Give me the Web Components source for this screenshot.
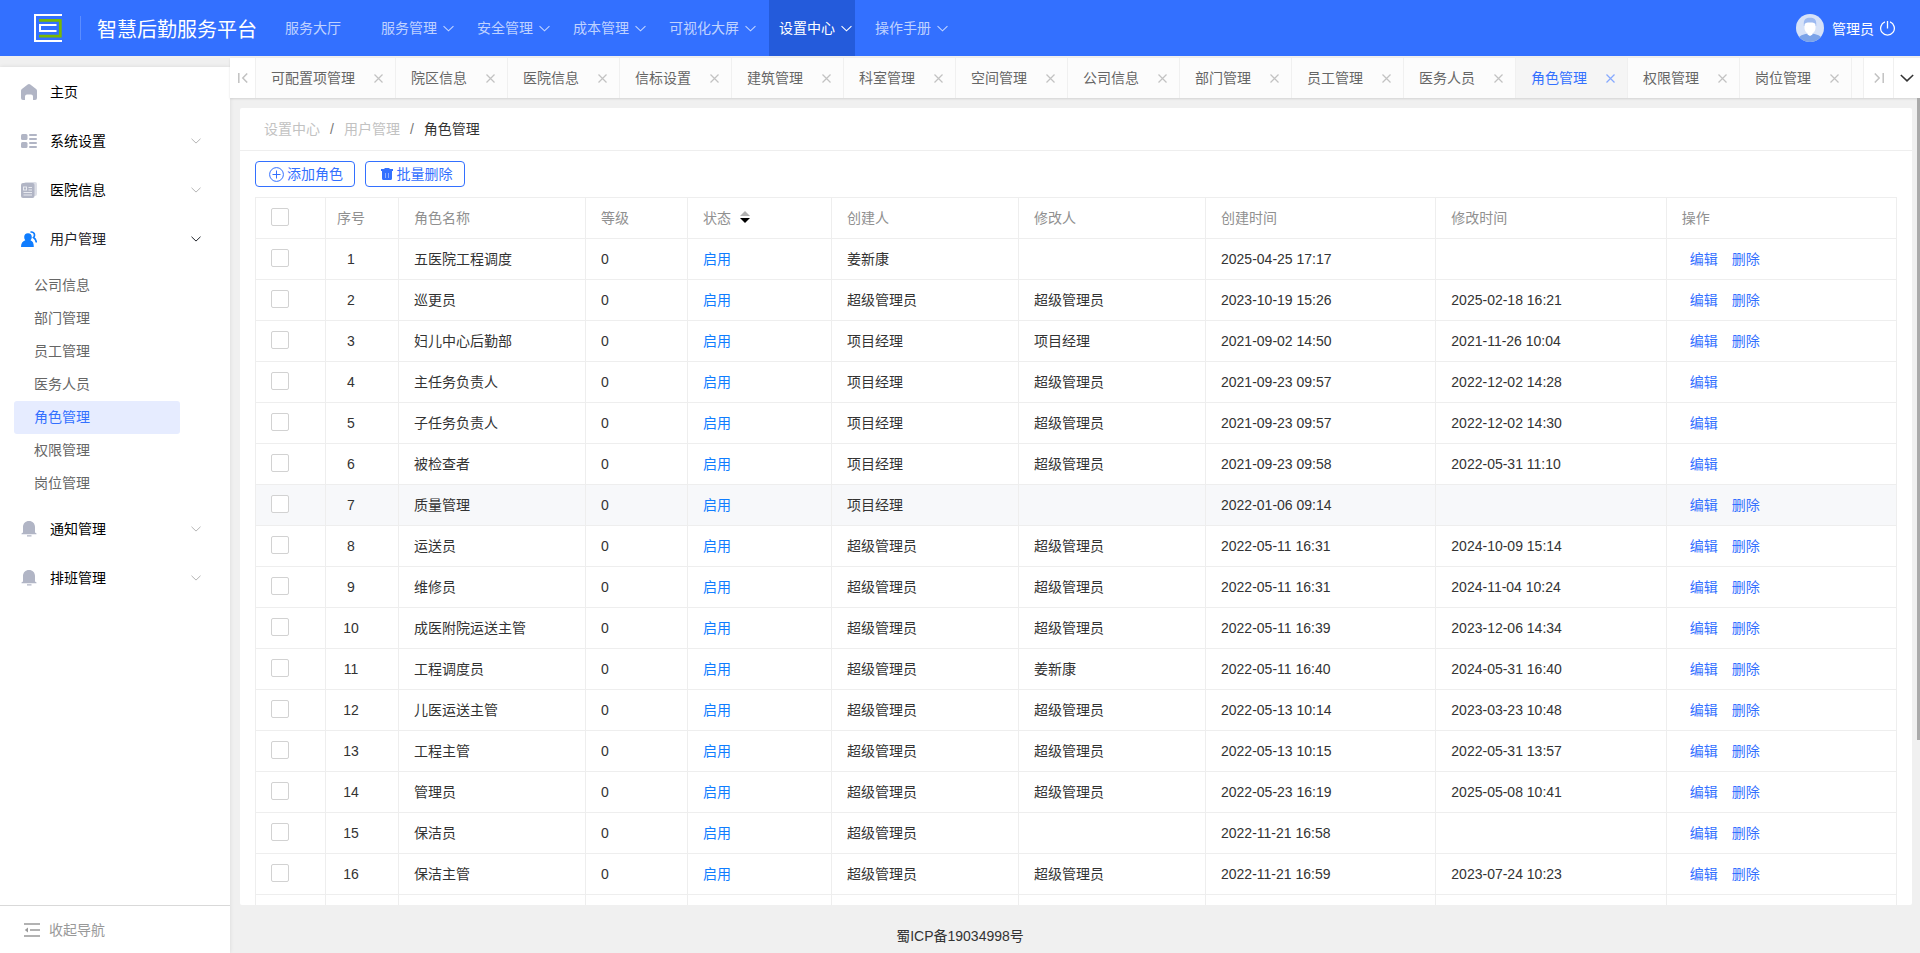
<!DOCTYPE html>
<html lang="zh-CN">
<head>
<meta charset="utf-8">
<title>智慧后勤服务平台</title>
<style>
  html, body { height: 100%; margin: 0; }
  body {
    font-family: "Liberation Sans", "Noto Sans CJK SC", sans-serif;
    font-size: 14px;
    line-height: 24px;
    color: #333;
    background: #f0f0f0;
    overflow: hidden;
  }
</style>
</head>
<body>
<admin-app></admin-app>

<script>
const BOX = '*{box-sizing:border-box}a{color:inherit;text-decoration:none}button{font:inherit;color:inherit;background:none;border:0;padding:0;cursor:pointer}svg{display:block;flex:none}';

const CHEVRON = (w, h, width = 1.2) =>
  `<svg width="${w}" height="${h}" viewBox="0 0 12 7" fill="none" stroke="currentColor" stroke-width="${width}" aria-hidden="true"><path d="M.6.8 6 6 11.4.8"/></svg>`;

const ICONS = {
  home: '<path fill="#b1b5c5" d="M8 0c.5 0 .9.2 1.300.5l5.800 4.400c.6.500.9 1.100.9 1.800V14a2 2 0 0 1-2 2h-2v-3.500a2 2 0 0 0-2-2h-4a2 2 0 0 0-2 2V16H2a2 2 0 0 1-2-2V6.700C0 6 .3 5.400.9 4.900L6.700.5C7.100.2 7.500 0 8 0z"/>',
  grid: '<g fill="#b1b5c5"><rect y="1" width="6.500" height="6" rx="1.500"/><rect y="9" width="6.500" height="6" rx="1.500"/><rect x="8" y="1" width="8" height="2" rx="1"/><rect x="8" y="5" width="8" height="2" rx="1"/><rect x="8" y="9" width="8" height="2" rx="1"/><rect x="8" y="13" width="8" height="2" rx="1"/></g>',
  news: '<rect x="3" y="0" width="13" height="14" rx="2" fill="#dcdee6"/><rect x="0" y="1" width="13.500" height="15" rx="2" fill="#b1b5c5"/><g stroke="#e8eaf0" stroke-width="1" fill="none"><path d="M7.500 5.500H11M7.500 8H11M2.500 10.500H11M2.500 13H11"/><rect x="2.500" y="5" width="3" height="3"/></g>',
  user: '<path d="M9.500 1.200a3 3 0 0 1 4 3c0 1-.4 1.700-1 2.300 1.900 1.200 2.600 2.900 2.900 5" stroke="#0f7dff" stroke-width="1.700" fill="none"/><path fill="#0f7dff" d="M7 2.200a3.800 3.800 0 0 1 3.800 3.800c0 1.300-.5 2.400-1.300 3.200 2.400.9 3.300 3 3.300 6.800H0c0-3.800 1.600-5.900 4.300-6.800A4.400 4.400 0 0 1 3.200 6 3.800 3.800 0 0 1 7 2.200z"/>',
  bell: '<path fill="#b1b5c5" d="M8 0c3.600 0 6 2.600 6 6v5.500l1.500.9v.9H.5v-.9l1.500-.9V6c0-3.400 2.400-6 6-6zM6 14.300h4.500v1.200H6z"/>'
};

function define(name, html) {
  customElements.define(name, class extends HTMLElement {
    constructor() {
      super();
      this.attachShadow({ mode: 'open' });
    }
    connectedCallback() {
      this.shadowRoot.innerHTML = typeof html === 'function' ? html(this) : html;
    }
  });
}

/* One entry of the top navigation */
define('nav-entry', el => `
<style>${BOX}
  :host{display:block}
  a{display:flex;align-items:center;height:56px;padding:0 3px 0 10px;min-width:86px;color:rgba(255,255,255,.7);white-space:nowrap}
  svg{margin-left:6px}
  :host([active]) a{background:#245bdb;color:#fff}
</style>
<a href="#"><slot></slot>${el.hasAttribute('plain') ? '' : CHEVRON(11, 7)}</a>`);

define('app-header', `
<style>${BOX}
  :host{display:flex;align-items:center;height:56px;background:#3370ff;color:#fff;padding:0 25px 0 34px}
  .rule{width:1px;height:24px;margin:0 16px 0 18px;background:#5c8dff}
  h1{margin:4px 18px 0 0;font-size:20px;line-height:28px;font-weight:400;white-space:nowrap}
  nav{display:flex;gap:10px;flex:1}
  .user{display:flex;align-items:center;white-space:nowrap}
  .user span{margin:2px 6px 0 8px}
</style>
<svg width="28" height="28" viewBox="0 0 28 28" role="img" aria-label="logo" fill="none">
  <path d="M28 1H1v26h27" stroke="#fff" stroke-width="2"/>
  <path d="M5 6.400h21.300v15.700H5" stroke="#7ab800" stroke-width="2.800"/>
  <path d="M22.500 11H6v6h16.500" stroke="#fff" stroke-width="2"/>
</svg>
<span class="rule"></span>
<h1>智慧后勤服务平台</h1>
<nav>
  <nav-entry plain>服务大厅</nav-entry>
  <nav-entry>服务管理</nav-entry>
  <nav-entry>安全管理</nav-entry>
  <nav-entry>成本管理</nav-entry>
  <nav-entry>可视化大屏</nav-entry>
  <nav-entry active>设置中心</nav-entry>
  <nav-entry>操作手册</nav-entry>
</nav>
<div class="user">
  <svg width="28" height="28" viewBox="0 0 28 28" aria-hidden="true">
    <defs><clipPath id="c"><circle cx="14" cy="14" r="14"/></clipPath></defs>
    <g clip-path="url(#c)">
      <rect width="28" height="28" fill="#d6e2f8"/>
      <ellipse cx="14" cy="25.500" rx="12" ry="6" fill="#7ba3e8"/>
      <path d="M11.500 17h5v3.500L14 22l-2.500-1.500z" fill="#fff"/>
      <path d="M7.800 12V9.500C7.800 5.500 10 3.800 14 3.800s6.200 1.700 6.200 5.700V12z" fill="#9dbaf0"/>
      <path d="M8.500 11c0-2 2-2.500 5.500-2.500s5.500.5 5.500 2.500v3c0 3.200-2.500 6-5.500 6s-5.500-2.800-5.500-6z" fill="#fff"/>
    </g>
  </svg>
  <span>管理员</span>
  <button aria-label="退出"><svg width="15" height="15" viewBox="0 0 14 14" fill="none" stroke="#fff" stroke-width="1.200"><path d="M4.600.9a6.400 6.400 0 1 0 4.800 0M7 0v7"/></svg></button>
</div>`);

/* Left menu row: icon, label, arrow */
define('side-item', el => `
<style>${BOX}
  :host{display:block;color:#000}
  a{display:flex;align-items:center;height:49px;padding:0 29px 0 21px}
  span{flex:1;margin-left:13px}
  .arrow{color:#b5b5b5}
  :host([open]) a{color:#1f2329}
  :host([open]) .arrow{color:#1f2329}
</style>
<a href="#"><svg width="16" height="16" viewBox="0 0 16 16" aria-hidden="true">${ICONS[el.getAttribute('icon')]}</svg>
<span><slot></slot></span>${el.hasAttribute('leaf') ? '' : `<i class="arrow">${CHEVRON(10, 6)}</i>`}</a>`);

define('side-link', `
<style>${BOX}
  :host{display:block;margin:0 50px 0 14px}
  a{display:block;height:33px;line-height:32px;padding-left:20px;border-radius:3px;color:#666}
  :host([active]) a{background:#e6ecff;color:#3370ff}
</style>
<a href="#"><slot></slot></a>`);

define('app-sidebar', `
<style>${BOX}
  :host{display:flex;flex-direction:column;background:#fff;box-shadow:0 0 4px rgba(0,0,0,.1);min-height:0}
  nav{flex:1;min-height:0;overflow:hidden}
  .sub{padding:6px 0 4px}
  .fold{display:flex;align-items:center;gap:9px;height:48px;padding-left:24px;border-top:1px solid #d9d9d9;color:#999}
</style>
<nav>
  <side-item icon="home" leaf>主页</side-item>
  <side-item icon="grid">系统设置</side-item>
  <side-item icon="news">医院信息</side-item>
  <side-item icon="user" open>用户管理</side-item>
  <div class="sub">
    <side-link>公司信息</side-link>
    <side-link>部门管理</side-link>
    <side-link>员工管理</side-link>
    <side-link>医务人员</side-link>
    <side-link active>角色管理</side-link>
    <side-link>权限管理</side-link>
    <side-link>岗位管理</side-link>
  </div>
  <side-item icon="bell">通知管理</side-item>
  <side-item icon="bell">排班管理</side-item>
</nav>
<button class="fold">
  <svg width="16" height="14" viewBox="0 0 16 14" aria-hidden="true"><path d="M0 1h16M6 7h10M0 13h16" stroke="#999" stroke-width="1.500"/><path d="M4 4.500v5L.8 7z" fill="#999"/></svg>
  收起导航
</button>`);

define('page-tab', `
<style>${BOX}
  :host{display:flex;align-items:center;justify-content:space-between;gap:19px;height:40px;padding:0 12px 0 15px;border-right:1px solid #f0f0f0;background:#fcfcfc;color:#666;white-space:nowrap;flex:none}
  button{color:#c2c2c2}
  :host([active]){background:#f5f5f5;color:#3370ff}
  :host([active]) button{color:#85a9ff}
</style>
<a href="#"><slot></slot></a>
<button aria-label="关闭"><svg width="9" height="9" viewBox="0 0 9 9" fill="none" stroke="currentColor" stroke-width="1.200"><path d="m.5.5 8 8m0-8-8 8"/></svg></button>`);

define('tab-bar', `
<style>${BOX}
  :host{display:flex;height:40px;background:#fcfcfc;box-shadow:0 1px 2px rgba(0,0,0,.12)}
  .end{display:flex;align-items:center;justify-content:center;width:26px;background:#fff;color:#c2c2c2;flex:none}
  .prev{border-right:1px solid #f0f0f0}
  .next{width:31px;border:1px solid #f0f0f0;border-width:0 1px}
  .more{color:#333}
  nav{display:flex;flex:1;min-width:0;overflow:hidden}
</style>
<button class="end prev" aria-label="向左"><svg width="10" height="10" viewBox="0 0 10 10" fill="none" stroke="currentColor" stroke-width="1.500"><path d="M.8 0v10M9.200.5 4.800 5l4.400 4.500"/></svg></button>
<nav>
  <page-tab>可配置项管理</page-tab>
  <page-tab>院区信息</page-tab>
  <page-tab>医院信息</page-tab>
  <page-tab>信标设置</page-tab>
  <page-tab>建筑管理</page-tab>
  <page-tab>科室管理</page-tab>
  <page-tab>空间管理</page-tab>
  <page-tab>公司信息</page-tab>
  <page-tab>部门管理</page-tab>
  <page-tab>员工管理</page-tab>
  <page-tab>医务人员</page-tab>
  <page-tab active>角色管理</page-tab>
  <page-tab>权限管理</page-tab>
  <page-tab>岗位管理</page-tab>
</nav>
<button class="end next" aria-label="向右"><svg width="10" height="10" viewBox="0 0 10 10" fill="none" stroke="currentColor" stroke-width="1.500"><path d="M9.200 0v10M.8.500 5.200 5 .8 9.500"/></svg></button>
<button class="end more" aria-label="更多">${CHEVRON(14, 8, 1.3)}</button>`);

define('crumb-trail', `
<style>${BOX}
  :host{display:flex;gap:10px;height:43px;line-height:42px;padding-left:24px;border-bottom:1px solid #eee;color:#777}
  a{color:#c2c2c2}
  b{font-weight:400;color:#333}
</style>
<a href="#">设置中心</a><span>/</span><a href="#">用户管理</a><span>/</span><b>角色管理</b>`);

define('tool-button', `
<style>${BOX}
  :host{display:block}
  button{display:flex;align-items:center;justify-content:center;gap:3px;width:100px;height:26px;line-height:24px;padding-left:2px;border:1px solid #3370ff;border-radius:4px;color:#3370ff;background:#fff}
</style>
<button><slot name="icon"></slot><slot></slot></button>`);

const A = '超级管理员', P = '项目经理', J = '姜新康';
const ROWS = [
  ['五医院工程调度', J, '', '2025-04-25 17:17', '', 1],
  ['巡更员', A, A, '2023-10-19 15:26', '2025-02-18 16:21', 1],
  ['妇儿中心后勤部', P, P, '2021-09-02 14:50', '2021-11-26 10:04', 1],
  ['主任务负责人', P, A, '2021-09-23 09:57', '2022-12-02 14:28', 0],
  ['子任务负责人', P, A, '2021-09-23 09:57', '2022-12-02 14:30', 0],
  ['被检查者', P, A, '2021-09-23 09:58', '2022-05-31 11:10', 0],
  ['质量管理', P, '', '2022-01-06 09:14', '', 1],
  ['运送员', A, A, '2022-05-11 16:31', '2024-10-09 15:14', 1],
  ['维修员', A, A, '2022-05-11 16:31', '2024-11-04 10:24', 1],
  ['成医附院运送主管', A, A, '2022-05-11 16:39', '2023-12-06 14:34', 1],
  ['工程调度员', A, J, '2022-05-11 16:40', '2024-05-31 16:40', 1],
  ['儿医运送主管', A, A, '2022-05-13 10:14', '2023-03-23 10:48', 1],
  ['工程主管', A, A, '2022-05-13 10:15', '2022-05-31 13:57', 1],
  ['管理员', A, A, '2022-05-23 16:19', '2025-05-08 10:41', 1],
  ['保洁员', A, '', '2022-11-21 16:58', '', 1],
  ['保洁主管', A, A, '2022-11-21 16:59', '2023-07-24 10:23', 1]
];

define('role-table', () => `
<style>${BOX}
  :host{display:block}
  table{width:100%;table-layout:fixed;border-collapse:collapse}
  th,td{height:41px;padding:0 15px;border:1px solid #eee;text-align:left;font-weight:400;white-space:nowrap}
  th{color:#909090}
  th:nth-child(2){padding-left:11px}
  td:nth-child(2){padding:0 22px 0 0;text-align:center}
  td:last-child{padding-left:23px}
  tr.hover{background:#f7f8fa}
  input{appearance:none;display:block;width:18px;height:18px;margin:0 0 2px;border:1px solid #d2d2d2;border-radius:2px;background:#fff}
  .on{color:#0f7dff}
  .act{color:#3370ff;margin-right:14px}
  .sort{display:inline-block;margin-left:9px}
</style>
<table>
  <colgroup>
    <col style="width:70px"><col style="width:73px"><col style="width:187px"><col style="width:102px"><col style="width:144px"><col style="width:187px"><col style="width:187px"><col><col><col>
  </colgroup>
  <thead><tr>
    <th><input type="checkbox" aria-label="全选"></th><th>序号</th><th>角色名称</th><th>等级</th>
    <th>状态<svg class="sort" width="10" height="12" viewBox="0 0 10 12" aria-hidden="true"><path d="M0 5 5 0l5 5z" fill="#b2b2b2"/><path d="M0 7h10l-5 5z" fill="#000"/></svg></th>
    <th>创建人</th><th>修改人</th><th>创建时间</th><th>修改时间</th><th>操作</th>
  </tr></thead>
  <tbody>${[...ROWS, null].map((r, i) => r ? `<tr${i === 6 ? ' class="hover"' : ''}>
    <td><input type="checkbox" aria-label="选择${r[0]}"></td><td>${i + 1}</td><td>${r[0]}</td><td>0</td><td class="on">启用</td>
    <td>${r[1]}</td><td>${r[2]}</td><td>${r[3]}</td><td>${r[4]}</td>
    <td><a class="act" href="#">编辑</a>${r[5] ? '<a class="act" href="#">删除</a>' : ''}</td></tr>`
    : '<tr>' + '<td></td>'.repeat(10) + '</tr>').join('')}</tbody>
</table>`);

define('role-panel', `
<style>${BOX}
  :host{display:block;background:#fff;border-radius:2px;overflow:hidden;min-height:0}
  .tools{display:flex;gap:10px;padding:10px 15px}
  .body{padding:0 15px}
</style>
<crumb-trail></crumb-trail>
<div class="tools">
  <tool-button><svg slot="icon" width="15" height="15" viewBox="0 0 15 15" fill="none" stroke="currentColor" aria-hidden="true"><circle cx="7.500" cy="7.500" r="6.900"/><path d="M7.500 3.500v8M3.500 7.500h8"/></svg>添加角色</tool-button>
  <tool-button><svg slot="icon" width="14" height="12" viewBox="0 0 14 12" fill="currentColor" aria-hidden="true"><path d="M4.500 1V0h5v1H13v2H1V1zM2 3h10v7.500a1.500 1.500 0 0 1-1.500 1.500h-7A1.500 1.500 0 0 1 2 10.500z"/><path d="M5.500 5v5M8.500 5v5" stroke="#8fb0ff"/></svg>批量删除</tool-button>
</div>
<div class="body"><role-table></role-table></div>`);

define('app-footer', `
<style>${BOX}
  :host{display:block;height:48px;line-height:62px;padding-right:230px;text-align:center}
</style>
<slot></slot>`);

define('admin-app', `
<style>${BOX}
  :host{display:grid;grid-template:56px minmax(0,1fr) / 230px minmax(0,1fr);height:100vh}
  app-header{grid-column:1 / -1}
  app-sidebar{margin-top:11px}
  main{display:flex;flex-direction:column;min-width:0;min-height:0;padding-top:2px}
  .scroll{display:flex;flex:1;min-height:0}
  role-panel{flex:1;min-width:0;margin:10px 5px 0 10px}
  .thumb{width:3px;height:79.5%;background:#aaa}
</style>
<app-header></app-header>
<app-sidebar></app-sidebar>
<main>
  <tab-bar></tab-bar>
  <div class="scroll"><role-panel></role-panel><div class="thumb"></div></div>
  <app-footer>蜀ICP备19034998号</app-footer>
</main>`);
</script>
</body>
</html>
